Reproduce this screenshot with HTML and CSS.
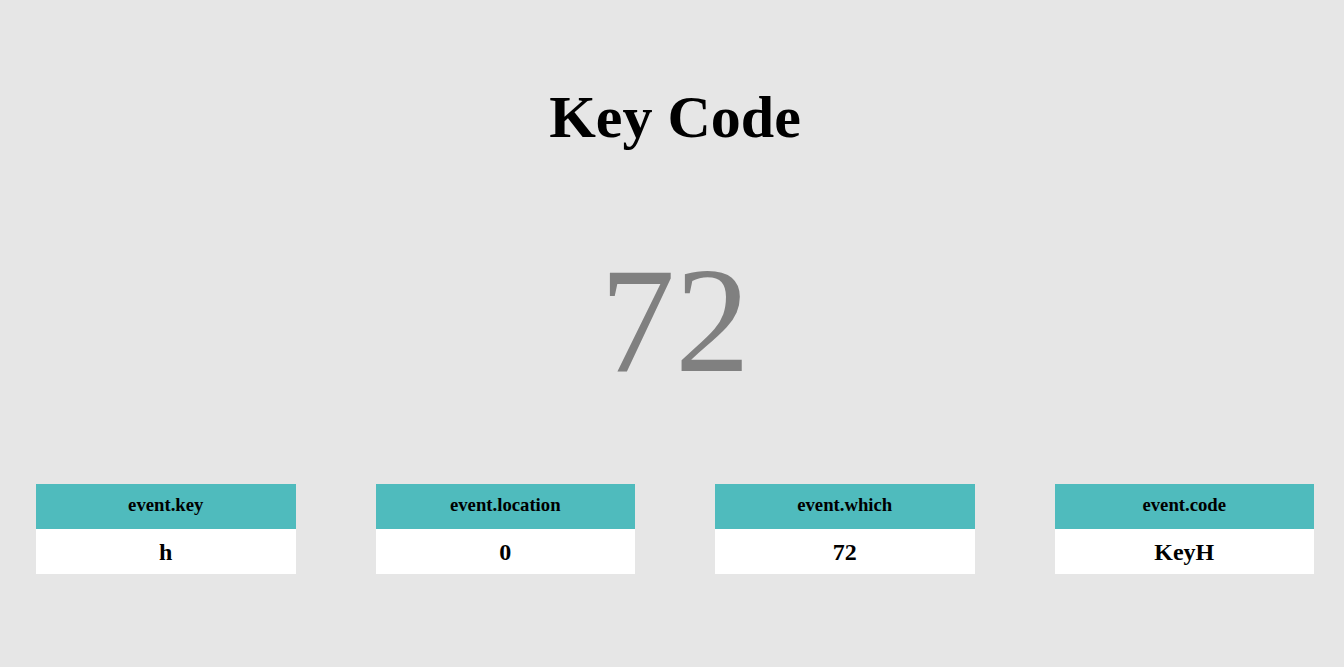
FILE: index.html
```html
<!DOCTYPE html>
<html lang="en">
<head>
<meta charset="utf-8">
<title>Key Code</title>
<link rel="stylesheet" href="styles.css">
</head>
<body>
<main class="page">
  <h1 class="title">Key Code</h1>
  <div class="code">72</div>
  <section class="cards">
    <div class="card">
      <div class="card-head">event.key</div>
      <div class="card-value">h</div>
    </div>
    <div class="card">
      <div class="card-head">event.location</div>
      <div class="card-value">0</div>
    </div>
    <div class="card">
      <div class="card-head">event.which</div>
      <div class="card-value">72</div>
    </div>
    <div class="card">
      <div class="card-head">event.code</div>
      <div class="card-value">KeyH</div>
    </div>
  </section>
</main>
</body>
</html>
```

FILE: styles.css
```css
html, body {
  margin: 0;
  padding: 0;
}
body {
  background: #e6e6e6;
  font-family: "Liberation Serif", "Times New Roman", serif;
  color: #000;
  height: 667px;
  overflow: hidden;
}
.page {
  display: flex;
  flex-direction: column;
  align-items: center;
  padding-left: 6px;
}
.title {
  margin: 83px 0 0;
  font-size: 60px;
  font-weight: bold;
  line-height: normal;
  text-align: center;
}
.code {
  margin-top: 82px;
  font-size: 150px;
  line-height: normal;
  color: #808080;
  text-align: center;
}
.cards {
  align-self: stretch;
  margin-top: 78px;
  padding: 0 30px 0 30px;
  display: flex;
  justify-content: space-between;
}
.card {
  width: 259.5px;
  text-align: center;
  font-weight: bold;
}
.card-head {
  background: #4fbbbd;
  height: 45px;
  line-height: 41px;
  font-size: 18.72px;
}
.card-value {
  background: #fff;
  height: 45px;
  line-height: 46px;
  font-size: 24px;
}
```
